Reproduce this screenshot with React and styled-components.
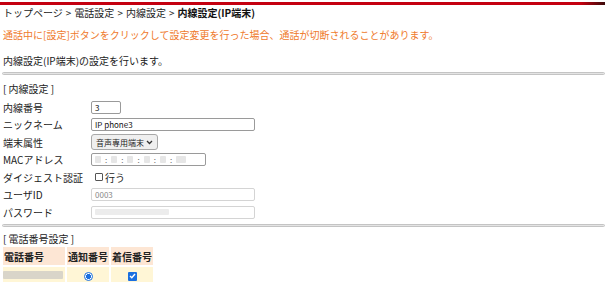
import React from "react";
import styled, { createGlobalStyle } from "styled-components";

const GlobalStyle = createGlobalStyle`
  body {
    margin: 0;
    background: #fff;
    font-family: "Noto Sans CJK JP", "Noto Sans", sans-serif;
    font-size: 10px;
    color: #222;
  }
`;

const Page = styled.div`
  width: 610px;
  display: flex;
  flex-direction: column;
`;

const TopBar = styled.div`
  height: 3px;
  margin: 2px 5px 0 0;
  background: linear-gradient(to right, #c40010 0%, #c40010 96%, #3a0a0a 100%);
`;

const Line = styled.div`
  padding: 0 3px;
  height: 14px;
  line-height: 14px;
  margin-top: ${(p) => p.$gap || 0}px;
  color: ${(p) => p.$color || "#222"};
  white-space: nowrap;
`;

const Sep = styled.span`
  margin: 0 3px;
`;

const Current = styled.b`
  font-weight: 700;
  color: #111;
`;

const Rule = styled.div`
  height: 1px;
  margin: ${(p) => p.$gap || 0}px 5px 0 2px;
  border: 1px solid #c4c4c4;
  border-radius: 2px;
  background: #e4e4e4;
`;

const FormGrid = styled.div`
  display: grid;
  grid-template-columns: 88px 1fr;
  grid-auto-rows: 17.5px;
  padding-left: 3px;
  margin-top: 2.5px;
  align-items: center;
`;

const Label = styled.div`
  white-space: nowrap;
`;

const Field = styled.div`
  display: flex;
  align-items: center;
`;

const TextBox = styled.div`
  box-sizing: border-box;
  width: ${(p) => p.$w}px;
  height: 13px;
  border: 1px solid ${(p) => (p.$disabled ? "#d4d4d4" : "#9a9a9a")};
  border-radius: 2px;
  padding: 0 3px;
  font-size: 8px;
  line-height: 11px;
  color: ${(p) => (p.$disabled ? "#888" : "#111")};
  display: flex;
  align-items: center;
  gap: 4px;
  background: #fff;
`;

const Blur = styled.span`
  display: inline-block;
  width: ${(p) => p.$w}px;
  height: ${(p) => p.$h || 7}px;
  background: ${(p) => p.$c || "#e6e6e6"};
  border-radius: 1px;
  filter: blur(0.6px);
`;

const Colon = styled.span`
  color: #666;
  font-size: 8px;
`;

const SelectBox = styled.div`
  box-sizing: border-box;
  width: 67px;
  height: 16px;
  border: 1px solid #a8a8a8;
  border-radius: 3px;
  background: #efefef;
  padding: 0 4px;
  display: flex;
  align-items: center;
  justify-content: space-between;
  font-size: 8px;
  color: #222;
`;

const Check = styled.span`
  box-sizing: border-box;
  display: inline-block;
  width: 8px;
  height: 8px;
  border: 1px solid #555;
  border-radius: 1px;
  margin: 0 2px 0 4px;
`;

const Table = styled.table`
  align-self: flex-start;
  border-collapse: separate;
  border-spacing: 2px;
  margin: -1px 0 0 1px;
`;

const Th = styled.th`
  background: #fde6d4;
  height: 18px;
  padding: 0 1px;
  width: ${(p) => p.$w}px;
  text-align: left;
  font-weight: 700;
  color: #222;
  white-space: nowrap;
`;

const Td = styled.td`
  background: #fff6d6;
  height: 15px;
  padding: 0;
  text-align: ${(p) => p.$align || "left"};
  vertical-align: middle;
`;

const Radio = styled.span`
  box-sizing: border-box;
  display: inline-block;
  width: 9px;
  height: 9px;
  border-radius: 50%;
  border: 1.5px solid #1a6fe0;
  background: radial-gradient(circle, #1a6fe0 45%, #fff 52%);
  vertical-align: middle;
`;

const BlueCheck = styled.span`
  display: inline-flex;
  width: 9px;
  height: 9px;
  border-radius: 1px;
  background: #1a6fe0;
  align-items: center;
  justify-content: center;
  vertical-align: middle;
`;

export default function App() {
  return (
    <Page>
      <GlobalStyle />
      <TopBar />
      <Line $gap={1}>
        トップページ<Sep>&gt;</Sep>電話設定<Sep>&gt;</Sep>内線設定<Sep>&gt;</Sep>
        <Current>内線設定(IP端末)</Current>
      </Line>
      <Line $gap={8} $color="#ef7a2c">
        通話中に[設定]ボタンをクリックして設定変更を行った場合、通話が切断されることがあります。
      </Line>
      <Line $gap={12}>内線設定(IP端末)の設定を行います。</Line>
      <Rule $gap={4} />
      <Line $gap={7}>[ 内線設定 ]</Line>
      <FormGrid>
        <Label>内線番号</Label>
        <Field>
          <TextBox $w={30}>3</TextBox>
        </Field>
        <Label>ニックネーム</Label>
        <Field>
          <TextBox $w={164}>IP phone3</TextBox>
        </Field>
        <Label>端末属性</Label>
        <Field>
          <SelectBox>
            音声専用端末
            <svg width="7" height="5" viewBox="0 0 7 5">
              <path d="M1 1l2.5 2.5L6 1" fill="none" stroke="#333" strokeWidth="1.3" />
            </svg>
          </SelectBox>
        </Field>
        <Label>MACアドレス</Label>
        <Field>
          <TextBox $w={115}>
            <Blur $w={6} />
            <Colon>:</Colon>
            <Blur $w={6} />
            <Colon>:</Colon>
            <Blur $w={6} />
            <Colon>:</Colon>
            <Blur $w={6} />
            <Colon>:</Colon>
            <Blur $w={6} />
            <Colon>:</Colon>
            <Blur $w={10} />
          </TextBox>
        </Field>
        <Label>ダイジェスト認証</Label>
        <Field>
          <Check />
          行う
        </Field>
        <Label>ユーザID</Label>
        <Field>
          <TextBox $w={164} $disabled>
            0003
          </TextBox>
        </Field>
        <Label>パスワード</Label>
        <Field>
          <TextBox $w={164} $disabled>
            <Blur $w={74} $h={6} $c="#ececec" />
          </TextBox>
        </Field>
      </FormGrid>
      <Rule $gap={3} />
      <Line $gap={5}>[ 電話番号設定 ]</Line>
      <Table>
        <thead>
          <tr>
            <Th $w={60}>電話番号</Th>
            <Th $w={38}>通知番号</Th>
            <Th $w={38}>着信番号</Th>
          </tr>
        </thead>
        <tbody>
          <tr>
            <Td>
              <Blur $w={60} $h={8} $c="#d9d5c9" />
            </Td>
            <Td $align="center">
              <Radio />
            </Td>
            <Td $align="center">
              <BlueCheck>
                <svg width="7" height="6" viewBox="0 0 7 6">
                  <path d="M1 3l1.8 1.8L6 1" fill="none" stroke="#fff" strokeWidth="1.4" />
                </svg>
              </BlueCheck>
            </Td>
          </tr>
        </tbody>
      </Table>
    </Page>
  );
}
